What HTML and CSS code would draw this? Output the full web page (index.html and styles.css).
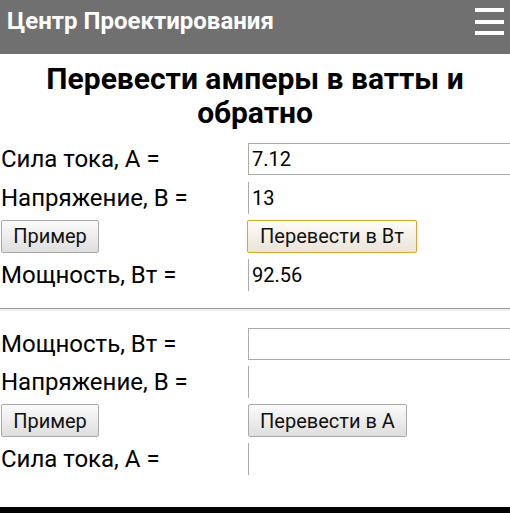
FILE: index.html
```html
<!DOCTYPE html>
<html lang="ru">
<head>
<meta charset="utf-8">
<title>Перевести амперы в ватты и обратно</title>
<link rel="stylesheet" href="styles.css">
</head>
<body>
<header class="topbar">
  <div class="brand">Центр Проектирования</div>
  <div class="burger"><span></span><span></span><span></span></div>
</header>
<h1 class="title">Перевести амперы в ватты и обратно</h1>
<div class="calc">
  <div class="label">Сила тока, А =</div>
  <div class="cell"><input class="field" type="text" value="7.12"></div>
  <div class="label">Напряжение, В =</div>
  <div class="cell"><input class="field plain" type="text" value="13"></div>
  <div class="cell"><button class="btn btn-example">Пример</button></div>
  <div class="cell"><button class="btn btn-go focus">Перевести в Вт</button></div>
  <div class="label">Мощность, Вт =</div>
  <div class="cell"><input class="field plain" type="text" value="92.56"></div>
</div>
<div class="sep"></div>
<div class="calc second">
  <div class="label">Мощность, Вт =</div>
  <div class="cell"><input class="field" type="text" value=""></div>
  <div class="label">Напряжение, В =</div>
  <div class="cell"><input class="field plain" type="text" value=""></div>
  <div class="cell"><button class="btn btn-example">Пример</button></div>
  <div class="cell"><button class="btn btn-go2">Перевести в А</button></div>
  <div class="label">Сила тока, А =</div>
  <div class="cell"><input class="field plain" type="text" value=""></div>
</div>
<div class="footer"></div>
</body>
</html>
```
FILE: styles.css
```css
html, body {
  margin: 0;
  padding: 0;
  overflow: hidden;
  background: #fff;
  font-family: Roboto, "Liberation Sans", sans-serif;
  color: #000;
}
body {
  width: 510px;
  height: 513px;
  position: relative;
}
.topbar {
  height: 54px;
  background: #707070;
  display: flex;
  justify-content: space-between;
  align-items: flex-start;
}
.brand {
  color: #fff;
  font-weight: bold;
  font-size: 24px;
  line-height: 24px;
  padding: 9px 0 0 7px;
}
.burger {
  width: 29px;
  margin: 8px 6px 0 0;
  display: flex;
  flex-direction: column;
  gap: 7.5px;
}
.burger span {
  display: block;
  height: 4px;
  background: #fff;
}
.title {
  margin: 8px 20px 0;
  text-align: center;
  font-size: 30px;
  line-height: 34px;
  font-weight: bold;
}
.calc {
  display: grid;
  grid-template-columns: 247px 1fr;
  grid-auto-rows: 32px;
  row-gap: 6.5px;
  margin-top: 13px;
}
.calc.second {
  margin-top: 17px;
}
.label {
  font-size: 24px;
  line-height: 32px;
  padding-left: 1px;
  white-space: nowrap;
}
.cell {
  display: flex;
  align-items: center;
  min-width: 0;
}
.field {
  box-sizing: border-box;
  width: 100%;
  height: 32px;
  margin: 0 0 0 1px;
  border: 1px solid #aaa;
  border-right: none;
  padding: 0 4px 0 3px;
  font-family: Roboto, "Liberation Sans", sans-serif;
  font-size: 20px;
  color: #000;
  background: #fff;
  outline: none;
}
.field.plain {
  border: none;
  border-left: 1px solid #aaa;
}
.btn {
  box-sizing: border-box;
  height: 33px;
  font-family: Roboto, "Liberation Sans", sans-serif;
  font-size: 20px;
  color: #111;
  border: 1px solid #a9a9a9;
  border-radius: 2px;
  background: linear-gradient(#fbfbfb, #dedede);
  padding: 0;
}
.btn-example {
  width: 98px;
  margin-left: 1px;
}
.btn-go {
  width: 170px;
  margin-left: 0;
}
.btn-go.focus {
  border-color: #e0a33a;
  box-shadow: 0 0 1px #f0c070;
  background: linear-gradient(#fffdf8, #e9e3d8);
}
.btn-go2 {
  width: 159px;
  margin-left: 1px;
}
.sep {
  margin-top: 17px;
  height: 1px;
  background: #999;
  border-bottom: 2px solid #eee;
}
.footer {
  position: absolute;
  left: 0;
  right: 0;
  bottom: 0;
  height: 6px;
  background: #000;
}
```
